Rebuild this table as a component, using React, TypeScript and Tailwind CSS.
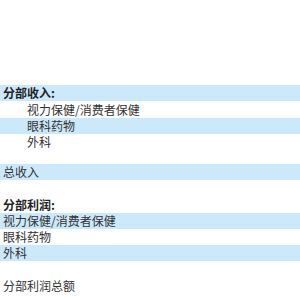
import React from "react";

interface Row {
  label: string;
  bold?: boolean;
  indent?: boolean;
  band?: boolean;
  h: string;
}

const rows: Row[] = [
  { label: "分部收入:", bold: true, band: true, h: "h-[16px]" },
  { label: "视力保健/消费者保健", indent: true, h: "h-[17px]" },
  { label: "眼科药物", indent: true, band: true, h: "h-[16px]" },
  { label: "外科", indent: true, h: "h-[16px]" },
  { label: "", h: "h-[14px]" },
  { label: "总收入", band: true, h: "h-[16px]" },
  { label: "", h: "h-[17px]" },
  { label: "分部利润:", bold: true, h: "h-[16px]" },
  { label: "视力保健/消费者保健", band: true, h: "h-[16px]" },
  { label: "眼科药物", h: "h-[16px]" },
  { label: "外科", band: true, h: "h-[16px]" },
  { label: "", h: "h-[17px]" },
  { label: "分部利润总额", h: "h-[16px]" },
];

export default function App() {
  return (
    <div
      className="w-[300px] h-[300px] bg-white pt-[85px] overflow-hidden text-[12px] text-[#333333]"
      style={{ fontFamily: '"Noto Sans CJK SC", "Liberation Sans", sans-serif' }}
    >
      {rows.map((r, i) => (
        <div
          key={i}
          className={`${r.h} flex items-center leading-none ${r.band ? "bg-[#cce9fb]" : ""} ${r.indent ? "pl-[27px]" : "pl-[3px]"} ${r.bold ? "font-bold text-[#222222]" : ""}`}
        >
          {r.label}
        </div>
      ))}
    </div>
  );
}
